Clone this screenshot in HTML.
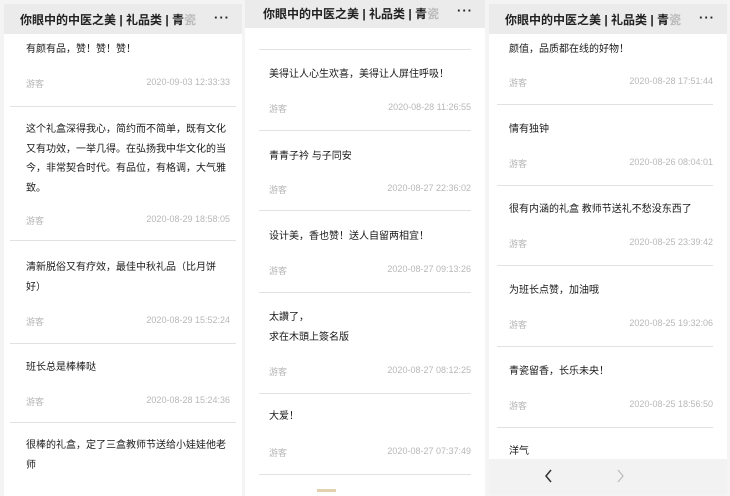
<!DOCTYPE html>
<html><head><meta charset="utf-8"><style>
*{margin:0;padding:0;box-sizing:border-box}
body{width:730px;height:496px;background:#f4f4f4;position:relative;overflow:hidden;font-family:"Liberation Sans","Noto Sans CJK SC",sans-serif}
.p{position:absolute;background:#fff;overflow:hidden}
.hd{position:absolute;left:0;right:0;background:#ebebeb;font-size:12px;color:#222;font-weight:bold;white-space:nowrap}
.hd .t{position:absolute;left:16px}
.hd .d{position:absolute;right:12px;font-size:13px;letter-spacing:1px}
.tx{position:absolute;font-size:10px;line-height:19.6px;color:#1a1a1a;width:200px}
.g{position:absolute;font-size:9px;color:#b5b5b5}
.dt{position:absolute;font-size:9px;color:#b8b8b8}
.s{position:absolute;height:1px;background:#e2e2e2}
</style></head><body>

<!-- panel 1 -->
<div class="p" style="left:4px;top:4px;width:238px;height:492px">
<div class="hd" style="top:0;height:30px"><span class="t" style="top:7px">你眼中的中医之美 | 礼品类 | 青<span style="color:#bbb">瓷</span></span><span class="d" style="top:6px">···</span></div>
<div class="tx" style="left:22px;top:36px">有颜有品，赞！赞！赞！</div>
<div class="g" style="left:22px;top:73px">游客</div><div class="dt" style="right:12px;top:73px">2020-09-03 12:33:33</div>
<div class="s" style="left:6px;width:226px;top:102px"></div>
<div class="tx" style="left:22px;top:116px">这个礼盒深得我心，简约而不简单，既有文化又有功效，一举几得。在弘扬我中华文化的当今，非常契合时代。有品位，有格调，大气雅致。</div>
<div class="g" style="left:22px;top:210px">游客</div><div class="dt" style="right:12px;top:210px">2020-08-29 18:58:05</div>
<div class="s" style="left:6px;width:226px;top:236px"></div>
<div class="tx" style="left:22px;top:254px">清新脱俗又有疗效，最佳中秋礼品（比月饼好）</div>
<div class="g" style="left:22px;top:311px">游客</div><div class="dt" style="right:12px;top:311px">2020-08-29 15:52:24</div>
<div class="s" style="left:6px;width:226px;top:339px"></div>
<div class="tx" style="left:22px;top:354px">班长总是棒棒哒</div>
<div class="g" style="left:22px;top:391px">游客</div><div class="dt" style="right:12px;top:391px">2020-08-28 15:24:36</div>
<div class="s" style="left:6px;width:226px;top:418px"></div>
<div class="tx" style="left:22px;top:432px">很棒的礼盒，定了三盒教师节送给小娃娃他老师</div>
</div>

<!-- panel 2 -->
<div class="p" style="left:245px;top:0;width:240px;height:496px">
<div class="hd" style="top:0;height:28px"><span class="t" style="top:5px;left:18px">你眼中的中医之美 | 礼品类 | 青<span style="color:#bbb">瓷</span></span><span class="d" style="top:3px">···</span></div>
<div class="s" style="left:14px;width:212px;top:49px"></div>
<div class="tx" style="left:24px;top:65px">美得让人心生欢喜，美得让人屏住呼吸！</div>
<div class="g" style="left:24px;top:102px">游客</div><div class="dt" style="right:14px;top:102px">2020-08-28 11:26:55</div>
<div class="s" style="left:14px;width:212px;top:130px"></div>
<div class="tx" style="left:24px;top:147px">青青子衿 与子同安</div>
<div class="g" style="left:24px;top:183px">游客</div><div class="dt" style="right:14px;top:183px">2020-08-27 22:36:02</div>
<div class="s" style="left:14px;width:212px;top:210px"></div>
<div class="tx" style="left:24px;top:227px">设计美，香也赞！送人自留两相宜！</div>
<div class="g" style="left:24px;top:264px">游客</div><div class="dt" style="right:14px;top:264px">2020-08-27 09:13:26</div>
<div class="s" style="left:14px;width:212px;top:292px"></div>
<div class="tx" style="left:24px;top:308px">太讚了，<br>求在木頭上簽名版</div>
<div class="g" style="left:24px;top:365px">游客</div><div class="dt" style="right:14px;top:365px">2020-08-27 08:12:25</div>
<div class="s" style="left:14px;width:212px;top:393px"></div>
<div class="tx" style="left:24px;top:407px">大爱！</div>
<div class="g" style="left:24px;top:446px">游客</div><div class="dt" style="right:14px;top:446px">2020-08-27 07:37:49</div>
<div class="s" style="left:14px;width:212px;top:474px"></div>
<div style="position:absolute;left:72px;top:489px;width:19px;height:3px;background:#e2d2b0"></div>
</div>

<!-- panel 3 -->
<div class="p" style="left:489px;top:4px;width:238px;height:490px">
<div class="hd" style="top:0;height:30px"><span class="t" style="top:7px">你眼中的中医之美 | 礼品类 | 青<span style="color:#bbb">瓷</span></span><span class="d" style="top:6px">···</span></div>
<div class="tx" style="left:20px;top:36px">颜值，品质都在线的好物！</div>
<div class="g" style="left:20px;top:72px">游客</div><div class="dt" style="right:14px;top:72px">2020-08-28 17:51:44</div>
<div class="s" style="left:8px;width:216px;top:100px"></div>
<div class="tx" style="left:20px;top:116px">情有独钟</div>
<div class="g" style="left:20px;top:153px">游客</div><div class="dt" style="right:14px;top:153px">2020-08-26 08:04:01</div>
<div class="s" style="left:8px;width:216px;top:181px"></div>
<div class="tx" style="left:20px;top:196px">很有内涵的礼盒 教师节送礼不愁没东西了</div>
<div class="g" style="left:20px;top:233px">游客</div><div class="dt" style="right:14px;top:233px">2020-08-25 23:39:42</div>
<div class="s" style="left:8px;width:216px;top:261px"></div>
<div class="tx" style="left:20px;top:277px">为班长点赞，加油哦</div>
<div class="g" style="left:20px;top:314px">游客</div><div class="dt" style="right:14px;top:314px">2020-08-25 19:32:06</div>
<div class="s" style="left:8px;width:216px;top:342px"></div>
<div class="tx" style="left:20px;top:358px">青瓷留香，长乐未央！</div>
<div class="g" style="left:20px;top:395px">游客</div><div class="dt" style="right:14px;top:395px">2020-08-25 18:56:50</div>
<div class="s" style="left:8px;width:216px;top:423px"></div>
<div class="tx" style="left:20px;top:438px">洋气</div>
<div style="position:absolute;left:0;right:0;top:455px;height:35px;background:#f2f2f2">
<svg style="position:absolute;left:55px;top:10px" width="10" height="14"><path d="M7 1 L2 7 L7 13" stroke="#333" stroke-width="1.5" fill="none"/></svg>
<svg style="position:absolute;left:126px;top:10px" width="10" height="14"><path d="M3 1 L8 7 L3 13" stroke="#bbb" stroke-width="1.2" fill="none"/></svg>
</div>
</div>
</body></html>
